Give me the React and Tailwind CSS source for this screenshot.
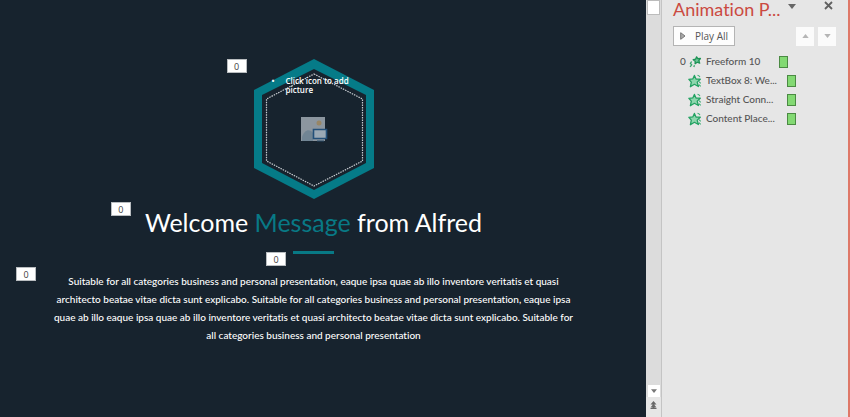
const animations = [
  { name: "Freeform 10", order: "0", kind: "motion" },
  { name: "TextBox 8: We...", order: "", kind: "entrance" },
  { name: "Straight Conn...", order: "", kind: "entrance" },
  { name: "Content Place...", order: "", kind: "entrance" },
];

function Tag({ className }) {
  return (
    <span
      className={`absolute flex h-[14px] w-[20px] items-center justify-center border border-[#b9bdc0] bg-white text-[9px] leading-none text-[#3c3c3c] ${className}`}
    >
      0
    </span>
  );
}

function Star({ kind }) {
  if (kind === "motion") {
    return (
      <svg viewBox="0 0 14 14" className="size-[14px]" aria-hidden="true">
        <path d="m8.600 1.800 1.200 1.900 2.600-.2-1.600 2 .9 2.600-2.500-.9-2.100 1.500.1-2.500-2-1.500 2.500-.6z" fill="#6cc497" stroke="#1d9355" strokeWidth="1.300" strokeLinejoin="round" />
        <path d="m3.600 6.500-1.200 2 1.300 1.300-1.600 2M6.500 10.200l-.7 1.800" stroke="#36a56c" strokeWidth="1.300" fill="none" />
      </svg>
    );
  }
  return (
    <svg viewBox="0 0 14 14" className="size-[14px]" aria-hidden="true">
      <path d="m6.400 1.400 1.600 3.600 4.300.2-3.100 2.900 1.200 4.400-4-2.200-4 2.400.9-4.500L.9 5.300l3.900-.4z" fill="#8ed6ae" stroke="#22a262" strokeWidth="1.300" strokeLinejoin="round" />
      <path d="M9.500 1.300c1.300.2 2 .8 2.400 1.800M11 7.600l1.700 1.700M11 10.600l1.700 1.700" fill="none" stroke="#3bae74" strokeWidth="1.100" />
    </svg>
  );
}

function Triangle({ up, className }) {
  return (
    <svg viewBox="0 0 8 5" className={className} aria-hidden="true">
      <path d={up ? "M0 5h8L4 0z" : "M0 0h8L4 5z"} fill="currentColor" />
    </svg>
  );
}

function PictureFrame() {
  return (
    <div className="relative h-[140px] w-[120px]">
      <svg viewBox="0 0 120 140" className="block size-full" aria-hidden="true">
        <path d="M60 0 120 31v78l-60 31L0 109V31z" fill="#057b88" />
        <path d="M60 10 112 36v68l-52 27L8 104V36z" fill="#17232e" />
        <path d="M60 15 108.500 40v62L60 127 12.500 102V40z" fill="none" stroke="#c6cbd0" strokeWidth="1.200" strokeDasharray="1.500 1" />
        <path d="M47 58h24v24H47z" fill="#8c969f" />
        <circle cx="65" cy="64" r="2.500" fill="#988665" />
        <path d="M48 78c3-8 8-8 11-4v8H48z" fill="#718594" />
        <path d="M59.500 70.500h13v9h-13z" fill="#9ba9b5" stroke="#245079" strokeWidth="1.600" />
        <path d="M63 82h7" stroke="#2b4c69" strokeWidth="1" />
      </svg>
      <Tag className="-left-[27px] top-0" />
      <ul className="absolute left-[18px] top-[17px] w-[86px] text-[8px] font-semibold leading-[9px] text-white">
        <li className="flex gap-[11px] before:content-['•']">Click icon to add picture</li>
      </ul>
    </div>
  );
}

function Slide() {
  return (
    <main className="flex min-w-0 flex-1 flex-col items-center bg-[#17232e] pr-[19px] pt-[59px] text-white">
      <PictureFrame />
      <div className="relative mt-[6px]">
        <Tag className="-left-[34px] -top-[3px]" />
        <h1 className="whitespace-nowrap font-[Lato,'Open_Sans',sans-serif] text-[25px] leading-[34px]">
          Welcome <span className="text-[#087985]">Message</span> from Alfred
        </h1>
      </div>
      <div className="relative mt-[12px] h-[3px] w-[41px] bg-[#087985]">
        <Tag className="-left-[27px] top-[1px]" />
      </div>
      <div className="relative mt-[18px] text-center text-[10px] leading-[18px]">
        <Tag className="-left-[38px] -top-[5px]" />
        <p className="whitespace-nowrap font-[Lato,'Open_Sans',sans-serif] font-medium [font-variant-ligatures:none]">
          Suitable for all categories business and personal presentation, eaque ipsa quae ab illo inventore veritatis et quasi
          <br />
          architecto beatae vitae dicta sunt explicabo. Suitable for all categories business and personal presentation, eaque ipsa
          <br />
          quae ab illo eaque ipsa quae ab illo inventore veritatis et quasi architecto beatae vitae dicta sunt explicabo. Suitable for
          <br />
          all categories business and personal presentation
        </p>
      </div>
    </main>
  );
}

function ScrollBar() {
  return (
    <div className="flex w-[16px] shrink-0 flex-col items-center border-r border-[#c4c4c4] bg-[#dcdcdc]">
      <button type="button" aria-label="Scroll thumb" className="h-[15px] w-[13px] border border-[#bcbcbc] bg-white" />
      <button type="button" aria-label="Scroll down" className="mt-auto flex h-[12px] w-[12px] items-center justify-center bg-white text-[#777]">
        <Triangle className="h-[4px] w-[6px]" />
      </button>
      <button type="button" aria-label="Previous slide" className="flex h-[20px] w-full items-center justify-center bg-[#e6e6e6] pb-[4px]">
        <svg viewBox="0 0 7 8" className="h-[8px] w-[7px]" aria-hidden="true">
          <path d="M3.500 0 6.500 3.500h-2V4l2 2.500H4.500V7h2v1h-6V7h2v-.5H.5L2.500 4v-.5h-2z" fill="#686868" />
        </svg>
      </button>
    </div>
  );
}

function AnimationPane() {
  return (
    <aside className="flex w-[188px] shrink-0 flex-col border-r-2 border-[#df7868] bg-[#e6e6e6] text-[#555]">
      <header className="flex h-[26px] items-start pl-[11px] pr-[15px]">
        <h2 className="w-[109px] whitespace-nowrap font-[Lato,'Open_Sans',sans-serif] text-[18px] leading-[18px] text-[#cb4a41] [font-variant-ligatures:none]">
          Animation P...
        </h2>
        <button type="button" aria-label="Pane options" className="ml-[6px] mt-[4px] text-[#666]">
          <Triangle className="h-[5px] w-[8px]" />
        </button>
        <button type="button" aria-label="Close" className="ml-auto mt-[1px] text-[#606060]">
          <svg viewBox="0 0 9 9" className="size-[9px]" aria-hidden="true">
            <path d="m1 1 7 7M8 1 1 8" stroke="currentColor" strokeWidth="1.800" />
          </svg>
        </button>
      </header>
      <div className="flex items-center pl-[11px] pr-[12px]">
        <button type="button" className="flex h-[20px] w-[62px] items-center gap-[9px] border border-[#b4b4b4] bg-[#fdfdfd] pl-[6px] text-[10px] text-[#555]">
          <svg viewBox="0 0 6 8" className="h-[8px] w-[6px]" aria-hidden="true">
            <path d="M.7.700v6.600L5 4z" fill="#aaa" stroke="#777" />
          </svg>
          Play All
        </button>
        <button type="button" aria-label="Move earlier" className="ml-auto flex h-[19px] w-[18px] items-center justify-center bg-[#fbfbfb] text-[#b5b5b5]">
          <Triangle up className="h-[4px] w-[7px]" />
        </button>
        <button type="button" aria-label="Move later" className="ml-[4px] flex h-[19px] w-[18px] items-center justify-center bg-[#fbfbfb] text-[#b5b5b5]">
          <Triangle className="h-[4px] w-[7px]" />
        </button>
      </div>
      <ul className="mt-[6px] font-[Lato,'Open_Sans',sans-serif] text-[10px] font-medium leading-[19px]">
        {animations.map((item) => (
          <li key={item.name} className="flex h-[19px] items-center pl-[18px]">
            <span className="w-[8px]">{item.order}</span>
            <Star kind={item.kind} />
            <span className="ml-[4px] w-[73px] whitespace-nowrap">{item.name}</span>
            <span
              className={`h-[12px] w-[9px] border border-[#4b8a43] bg-[#83d973] ${item.kind === "motion" ? "" : "ml-[8px]"}`}
            />
          </li>
        ))}
      </ul>
    </aside>
  );
}

export default function App() {
  return (
    <div className="flex min-h-screen w-full overflow-hidden font-['Open_Sans','Noto_Sans',sans-serif]">
      <Slide />
      <ScrollBar />
      <AnimationPane />
    </div>
  );
}
